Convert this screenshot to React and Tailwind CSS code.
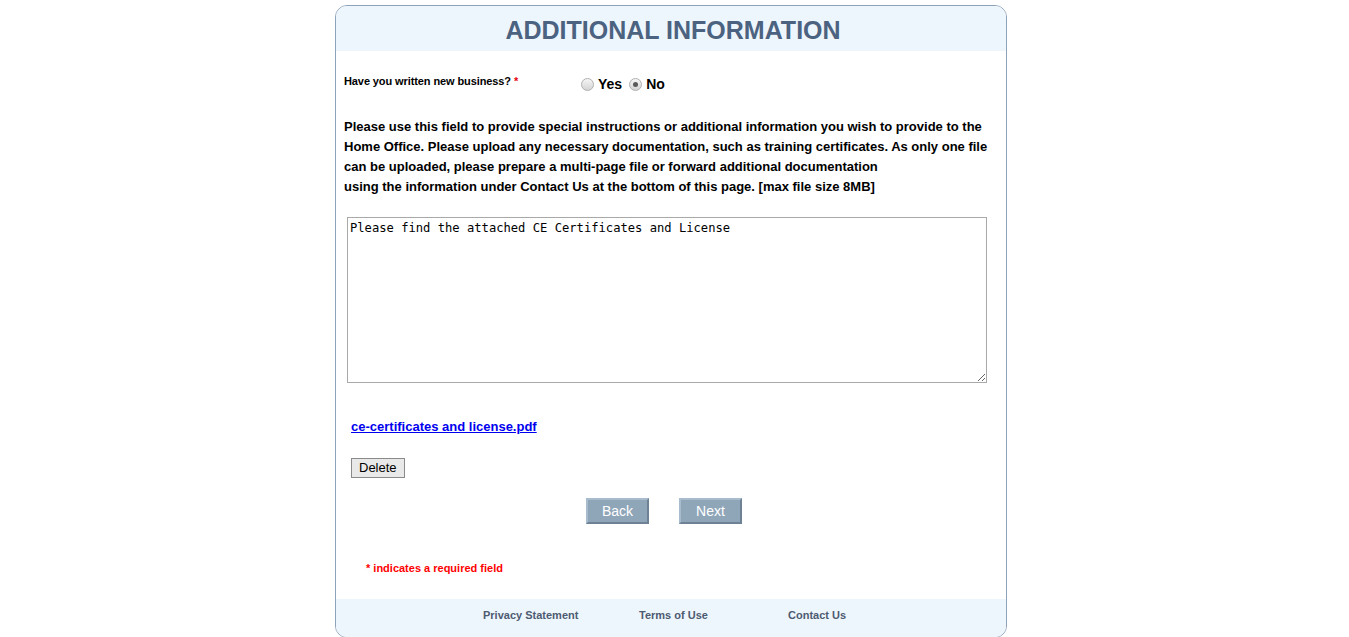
import { useState } from "react";

const footerLinks = ["Privacy Statement", "Terms of Use", "Contact Us"];

function Radio({ checked, onChange }) {
  return (
    <button
      type="button"
      onClick={onChange}
      className="mr-[4px] flex h-[13px] w-[13px] items-center justify-center rounded-full border border-[#b0b0b0] bg-gradient-to-b from-[#f6f6f6] to-[#d4d4d4]"
    >
      {checked && <span className="h-[5px] w-[5px] rounded-full bg-[#5a5a5a]" />}
    </button>
  );
}

export default function App() {
  const [written, setWritten] = useState("no");
  const [notes, setNotes] = useState("Please find the attached CE Certificates and License");

  return (
    <div className="h-[637px] overflow-hidden bg-white font-['Liberation_Sans',Arial,sans-serif] text-black">
      <div className="ml-[335px] mt-[5px] w-[672px] overflow-hidden rounded-[12px] border border-[#8ea2b8]">
        <div className="flex h-[45px] items-center justify-center bg-[#eef6fd]">
          <h1 className="pl-[4px] pt-[5px] text-[25px] font-bold text-[#4b6280]">ADDITIONAL INFORMATION</h1>
        </div>

        <div className="px-[8px]">
          <div className="mt-[21px] flex items-start">
            <label className="w-[237px] pt-[1px] text-[11px] font-bold tracking-[-0.1px]">
              Have you written new business? <span className="text-red-600">*</span>
            </label>
            <div className="flex items-center pt-[2px] text-[14px] font-bold">
              <Radio checked={written === "yes"} onChange={() => setWritten("yes")} />
              <span className="mr-[7px]">Yes</span>
              <Radio checked={written === "no"} onChange={() => setWritten("no")} />
              <span>No</span>
            </div>
          </div>

          <p className="mt-[22px] w-[650px] text-[13px] font-bold leading-[20px]">
            Please use this field to provide special instructions or additional information you wish to provide to the
            Home Office. Please upload any necessary documentation, such as training certificates. As only one file
            can be uploaded, please prepare a multi-page file or forward additional documentation
            <br />
            using the information under Contact Us at the bottom of this page. [max file size 8MB]
          </p>

          <textarea
            className="ml-[3px] mt-[20px] block h-[166px] w-[640px] resize border border-[#a9a9a9] px-[2px] py-[2px] font-['DejaVu_Sans_Mono',monospace] text-[12.15px] leading-[16px] outline-none"
            value={notes}
            onChange={(e) => setNotes(e.target.value)}
          />

          <a href="#" className="ml-[7px] mt-[34px] inline-block text-[13px] font-bold text-[#0000ee] underline">
            ce-certificates and license.pdf
          </a>

          <div className="ml-[7px] mt-[17px]">
            <button
              type="button"
              className="h-[20px] border border-[#8a8a8a] bg-[#e9e9e9] px-[7px] text-[13px] leading-[18px] text-black"
            >
              Delete
            </button>
          </div>

          <div className="mt-[19px] flex justify-center gap-[30px] pr-[14px]">
            <button
              type="button"
              className="h-[26px] w-[63px] border-2 border-[#a9bccd] border-r-[#6f8195] border-b-[#6f8195] bg-[#8fa6b9] text-[14px] text-white"
            >
              Back
            </button>
            <button
              type="button"
              className="h-[26px] w-[63px] border-2 border-[#a9bccd] border-r-[#6f8195] border-b-[#6f8195] bg-[#8fa6b9] text-[14px] text-white"
            >
              Next
            </button>
          </div>

          <p className="ml-[22px] mt-[36px] text-[11px] font-bold text-[#ff0000]">* indicates a required field</p>
        </div>

        <div className="mt-[22px] flex h-[38px] items-start bg-[#eef6fd] pl-[147px] pt-[8px] text-[11px] font-bold text-[#4d5b70]">
          {footerLinks.map((link, i) => (
            <a
              key={link}
              href="#"
              className={i === 0 ? "w-[156px]" : i === 1 ? "w-[149px]" : ""}
            >
              {link}
            </a>
          ))}
        </div>
      </div>
    </div>
  );
}
